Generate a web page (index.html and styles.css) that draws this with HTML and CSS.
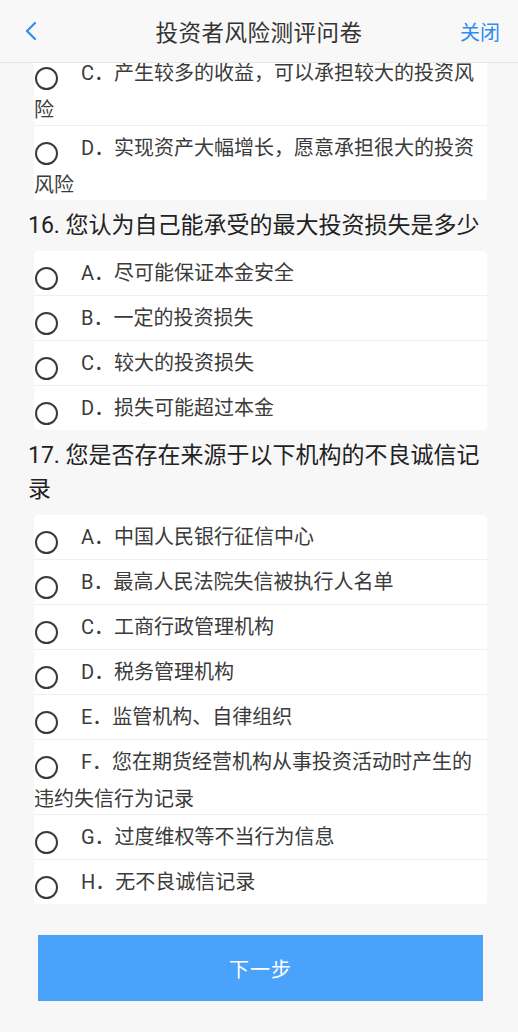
FILE: index.html
```html
<!DOCTYPE html>
<html lang="zh-CN">
<head>
<meta charset="utf-8">
<title>投资者风险测评问卷</title>
<link rel="stylesheet" href="styles.css">
</head>
<body>
<header class="topbar">
  <div class="topbar-left">
    <svg class="back" width="14" height="20" viewBox="0 0 14 20" aria-hidden="true">
      <polyline points="11,2 3,10 11,18" fill="none" stroke="#2f8cf0" stroke-width="2.2" stroke-linecap="round" stroke-linejoin="round"/>
    </svg>
  </div>
  <h1 class="topbar-title">投资者风险测评问卷</h1>
  <div class="topbar-right"><span class="close">关闭</span></div>
</header>
<main class="survey">
  <ul class="options">
    <li class="option"><span class="radio"></span>C．产生较多的收益，可以承担较大的投资风险</li>
    <li class="option"><span class="radio"></span>D．实现资产大幅增长，愿意承担很大的投资风险</li>
  </ul>
  <h2 class="question">16. 您认为自己能承受的最大投资损失是多少</h2>
  <ul class="options">
    <li class="option"><span class="radio"></span>A．尽可能保证本金安全</li>
    <li class="option"><span class="radio"></span>B．一定的投资损失</li>
    <li class="option"><span class="radio"></span>C．较大的投资损失</li>
    <li class="option"><span class="radio"></span>D．损失可能超过本金</li>
  </ul>
  <h2 class="question">17. 您是否存在来源于以下机构的不良诚信记录</h2>
  <ul class="options">
    <li class="option"><span class="radio"></span>A．中国人民银行征信中心</li>
    <li class="option"><span class="radio"></span>B．最高人民法院失信被执行人名单</li>
    <li class="option"><span class="radio"></span>C．工商行政管理机构</li>
    <li class="option"><span class="radio"></span>D．税务管理机构</li>
    <li class="option"><span class="radio"></span>E．监管机构、自律组织</li>
    <li class="option"><span class="radio"></span>F．您在期货经营机构从事投资活动时产生的违约失信行为记录</li>
    <li class="option"><span class="radio"></span>G．过度维权等不当行为信息</li>
    <li class="option"><span class="radio"></span>H．无不良诚信记录</li>
  </ul>
  <button class="next" type="button">下一步</button>
</main>
</body>
</html>
```
FILE: styles.css
```css
html, body {
  margin: 0;
  padding: 0;
}
body {
  background: #f7f7f8;
  font-family: Roboto, "Noto Sans CJK SC", sans-serif;
  color: #333;
  overflow: hidden;
}
.topbar {
  position: absolute;
  top: 0;
  left: 0;
  right: 0;
  z-index: 2;
  height: 63px;
  box-sizing: border-box;
  display: grid;
  grid-template-columns: 1fr auto 1fr;
  align-items: center;
  background: #f8f8f8;
  border-bottom: 1px solid #e6e6e6;
}
.topbar-left {
  padding-left: 24px;
  display: flex;
  align-items: center;
}
.back {
  display: block;
}
.topbar-title {
  margin: 0;
  font-size: 22.5px;
  font-weight: normal;
  color: #333;
  letter-spacing: 0.5px;
}
.topbar-right {
  text-align: right;
  padding-right: 18px;
}
.close {
  font-size: 20px;
  color: #2f8cf0;
}
.survey {
  padding: 51px 28px 0 28px;
}
.options {
  list-style: none;
  margin: 0 3px 0 6px;
  padding: 0;
  background: #fff;
  border-radius: 4px;
}
.option {
  padding-top: 7px;
  font-size: 20px;
  line-height: 30px;
  color: #3b3b3b;
  border-bottom: 1px solid #f0f0f0;
}
.option:last-child {
  border-bottom: none;
}
.radio {
  display: inline-block;
  width: 23px;
  height: 23px;
  box-sizing: border-box;
  border: 2px solid #3a3a3a;
  border-radius: 50%;
  background: #fff;
  vertical-align: -15px;
  margin: 0 23px 5px 1px;
}
.question {
  margin: 9px 0 8px;
  font-size: 23px;
  line-height: 34px;
  font-weight: normal;
  color: #222;
}
.next {
  display: block;
  margin: 31px 7px 0 10px;
  width: 445px;
  height: 66px;
  border: none;
  border-radius: 0;
  background: #4aa3fb;
  color: #fff;
  font-family: inherit;
  font-size: 20px;
  letter-spacing: 1px;
}
```
